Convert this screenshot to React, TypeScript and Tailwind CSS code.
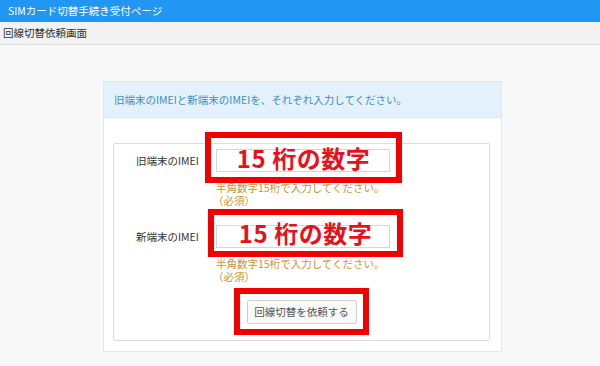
import React from 'react';

const font = { fontFamily: '"Noto Sans CJK JP", "Noto Sans", sans-serif' };

const Mark: React.FC<{ className: string; label?: string }> = ({ className, label }) => (
  <div
    className={`absolute border-[6px] border-[#f20000] flex items-center justify-center pointer-events-none ${className}`}
  >
    {label && <span className="text-[24px] font-bold text-[#e8101a] leading-none tracking-[0.5px]">{label}</span>}
  </div>
);

const ImeiRow: React.FC<{ label: string; markClass: string; className?: string }> = ({ label, markClass, className = '' }) => (
  <div className={`flex pl-[22px] ${className}`}>
    <div className="w-[80px] h-[23px] flex items-center text-[10.5px] text-[#333]">{label}</div>
    <div>
      <div className="relative w-[174px] h-[23px] border border-[#c5dbe8] bg-white">
        <Mark className={markClass} label="15 桁の数字" />
      </div>
      <div className="mt-[9px] text-[10.5px] leading-[13px] text-[#c99235]">
        <div>半角数字15桁で入力してください。</div>
        <div className="-ml-[3px]">（必須）</div>
      </div>
    </div>
  </div>
);

export default function App() {
  return (
    <div style={font} className="w-[600px] h-[366px] bg-[#f8f8f8] overflow-hidden">
      <div className="h-[22px] bg-[#2196f3] text-white text-[10.5px] flex items-center pl-[8px]">
        SIMカード切替手続き受付ページ
      </div>
      <div className="h-[23px] bg-[#f2f2f2] border-b border-[#dedede] text-[#333] text-[10.5px] flex items-center pl-[3px]">
        回線切替依頼画面
      </div>
      <div className="pt-[36px] pl-[103px]">
        <div className="w-[399px] h-[271px] bg-white border border-[#e6e6e6]">
          <div className="h-[36px] bg-[#e2f1fb] border-b border-[#d3e8f5] text-[#3f8fc4] text-[10.5px] flex items-center pl-[10px]">
            旧端末のIMEIと新端末のIMEIを、それぞれ入力してください。
          </div>
          <div className="ml-[9px] mr-[11px] mt-[25px] h-[198px] border border-[#dcdcdc] rounded-[2px] pt-[5px]">
            <ImeiRow label="旧端末のIMEI" markClass="-left-[12px] -top-[18px] -right-[13px] -bottom-[12px]" />
            <ImeiRow
              label="新端末のIMEI"
              className="mt-[18px]"
              markClass="-left-[9px] -top-[17px] -right-[14px] -bottom-[10px]"
            />
            <div className="flex justify-center mt-[17px]">
              <button
                type="button"
                className="relative w-[110px] h-[24px] border border-[#cfcfcf] bg-[#fafafa] text-[10.5px] text-[#555] rounded-[2px]"
              >
                回線切替を依頼する
                <Mark className="-left-[14px] -top-[13px] -right-[13px] -bottom-[12px]" />
              </button>
            </div>
          </div>
        </div>
      </div>
    </div>
  );
}
